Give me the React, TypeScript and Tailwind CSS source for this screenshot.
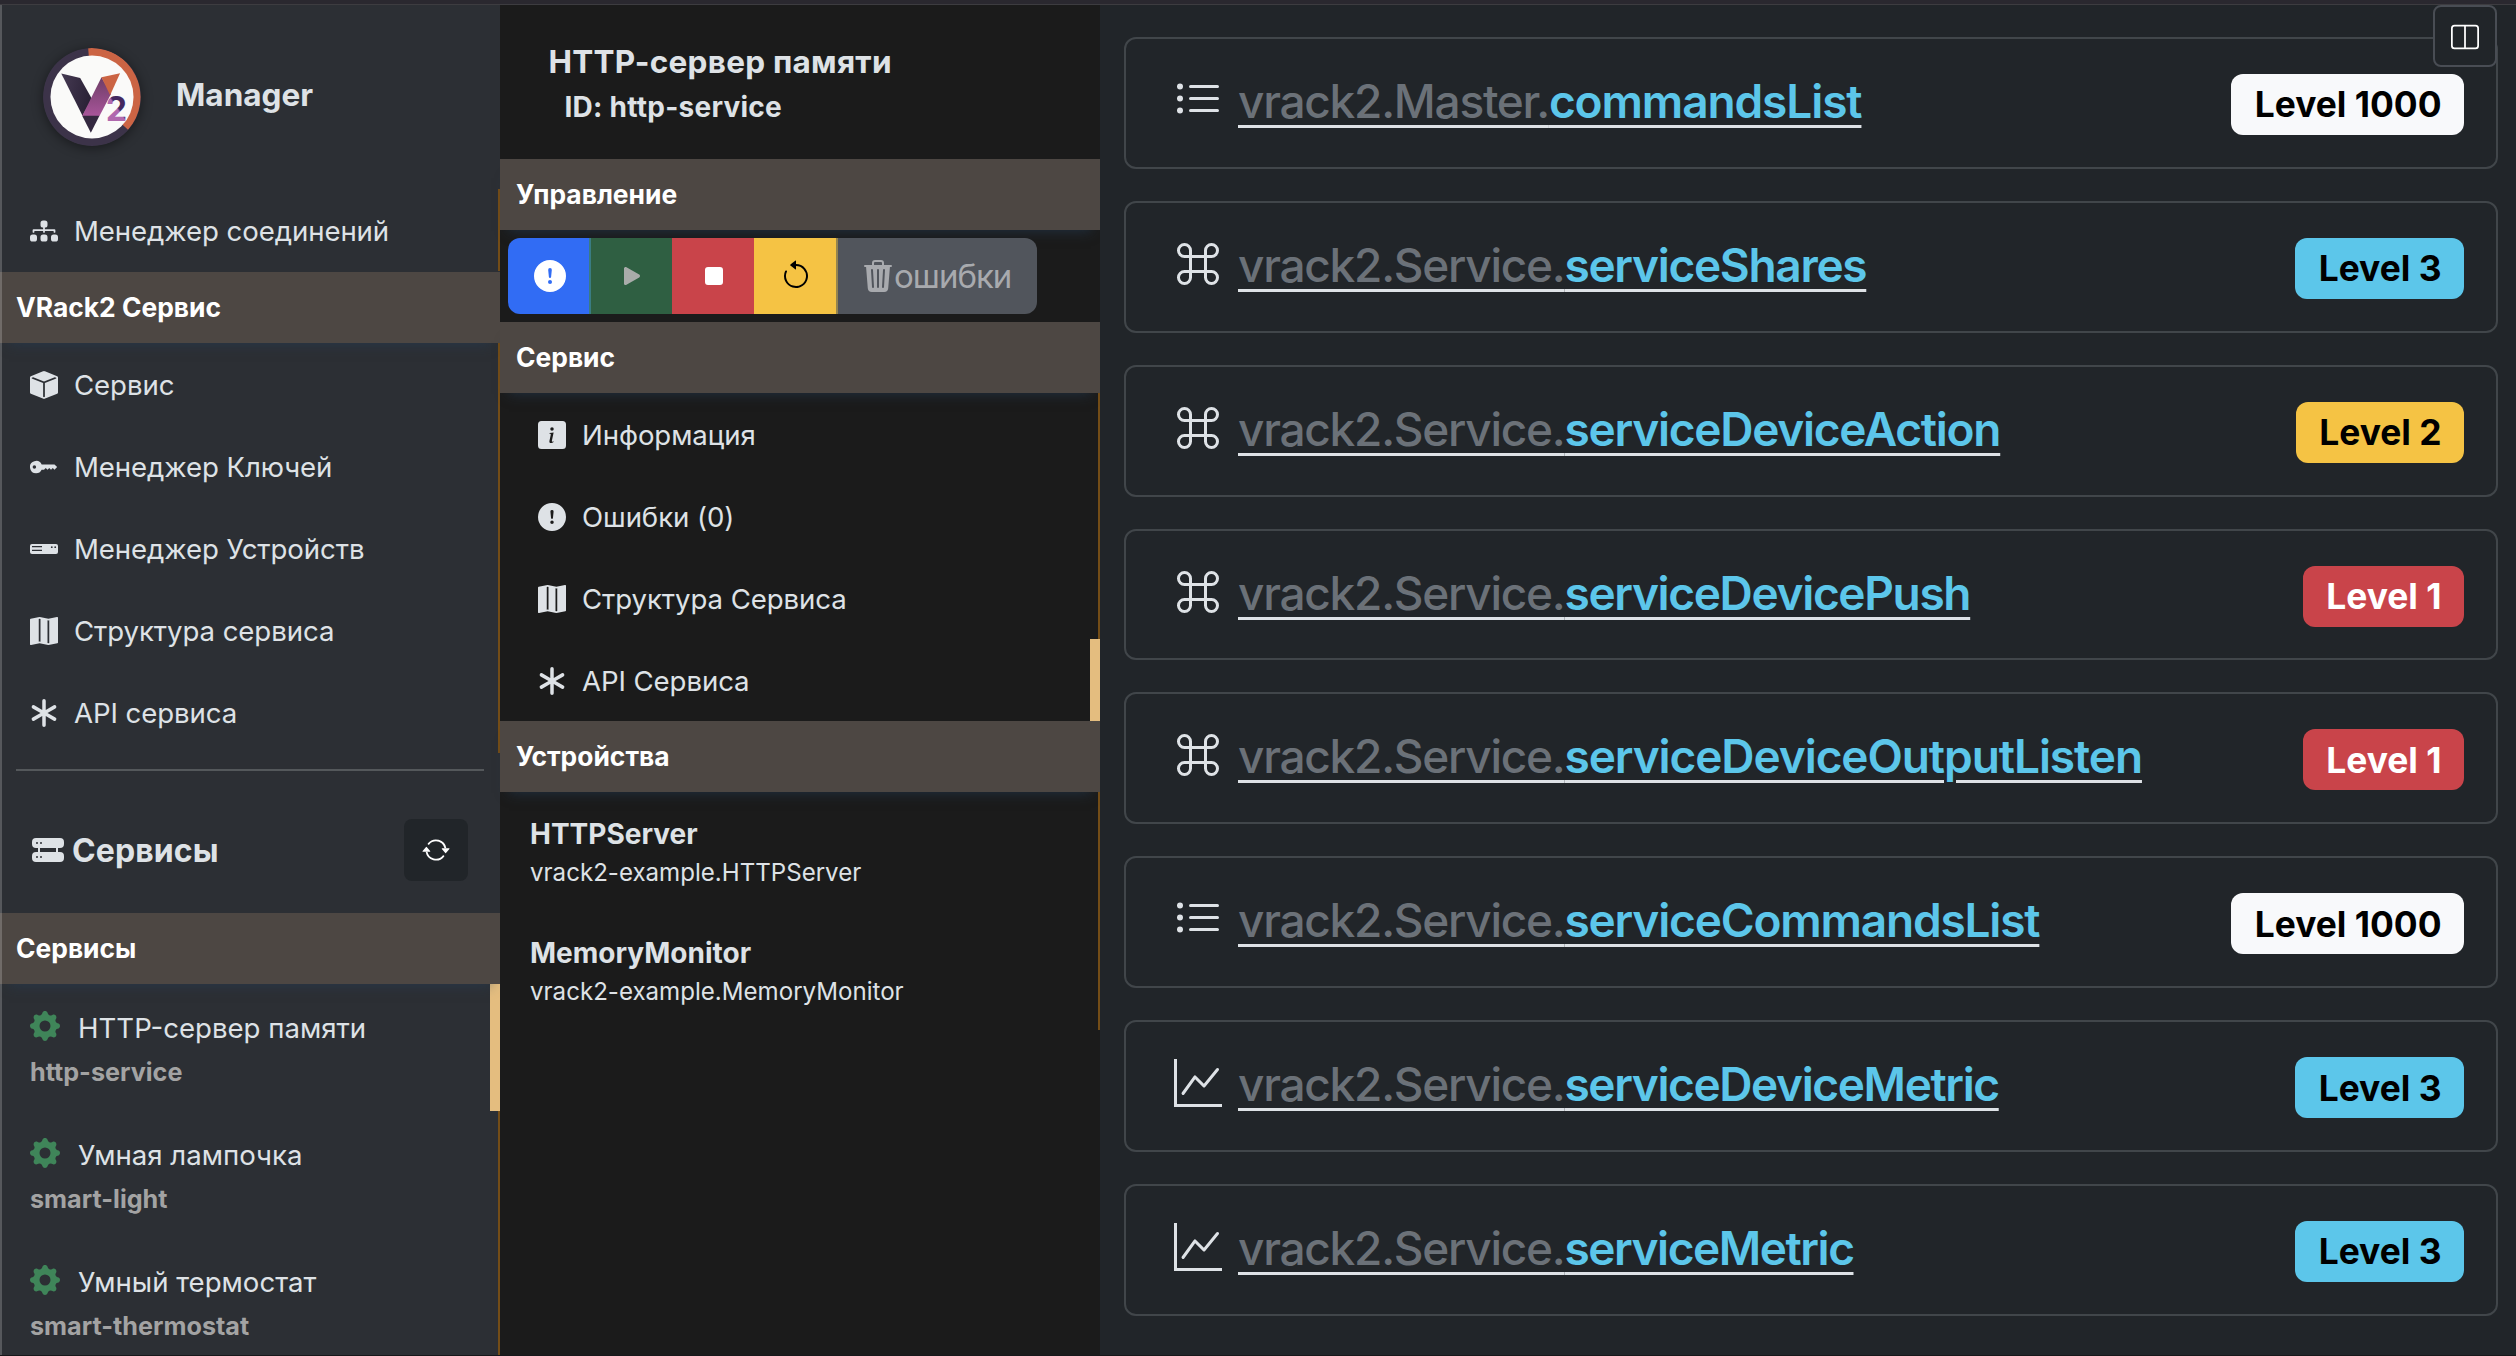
import React from "react";
import {
  BsArrowCounterclockwise,
  BsArrowRepeat,
  BsAsterisk,
  BsCommand,
  BsDiagram3Fill,
  BsExclamationCircleFill,
  BsGearFill,
  BsGraphUp,
  BsHddRackFill,
  BsInfoSquareFill,
  BsKeyFill,
  BsLayoutSplit,
  BsListUl,
  BsMapFill,
  BsPlayFill,
  BsStopFill,
  BsTrash3Fill,
} from "react-icons/bs";

type IconType = React.ComponentType<{ className?: string }>;

function BoxIcon({ className }: { className?: string }) {
  return (
    <svg viewBox="0 0 16 16" fill="currentColor" className={className}>
      <path d="M15.528 2.973a.75.75 0 0 1 .472.696v8.662a.75.75 0 0 1-.472.696l-7.25 2.9a.75.75 0 0 1-.557 0l-7.25-2.9A.75.75 0 0 1 0 12.331V3.669a.75.75 0 0 1 .471-.696L7.443.184l.004-.001.274-.11a.75.75 0 0 1 .558 0l.274.11.004.001zm-1.374.527L8 5.962 1.846 3.5 1 3.839v.4l6.5 2.6v7.922l.5.2.5-.2V6.84l6.5-2.6v-.4l-.846-.339Z" />
    </svg>
  );
}

function DeviceIcon({ className }: { className?: string }) {
  return (
    <svg viewBox="0 0 28 28" className={className}>
      <rect x="0" y="9" width="28" height="10" rx="2" fill="currentColor" />
      <path d="M2 11.7h10M2 15.3h10" stroke="#2c2f34" strokeWidth="1.2" />
      <circle cx="21.8" cy="12.2" r="0.9" fill="#2c2f34" />
      <circle cx="25.2" cy="12.2" r="0.9" fill="#2c2f34" />
    </svg>
  );
}

function Logo() {
  return (
    <svg viewBox="21 22 295 295" className="size-[98px] rounded-full shadow-[0_2px_12px_rgba(0,0,0,0.45)]">
      <defs>
        <linearGradient id="left" x1="0" y1="0" x2="1" y2="0.3">
          <stop offset="0" stopColor="#453a52" />
          <stop offset="1" stopColor="#2b2237" />
        </linearGradient>
        <linearGradient id="mid" x1="0" y1="0" x2="0" y2="1">
          <stop offset="0" stopColor="#6d3d66" />
          <stop offset="1" stopColor="#a8559a" />
        </linearGradient>
        <linearGradient id="two" x1="1" y1="0" x2="0.25" y2="1">
          <stop offset="0.5" stopColor="#43285f" />
          <stop offset="0.55" stopColor="#b069ae" />
        </linearGradient>
      </defs>
      <circle cx="168.500" cy="169.500" r="147.500" fill="#3c3349" />
      <path d="M157 22.500A147.500 147.500 0 0 1 277 268L168.500 169.500Z" fill="#cb6444" />
      <circle cx="168.500" cy="169.500" r="125" fill="#fafaf9" />
      <path d="M76 99L133 112L168 175L140 226Z" fill="url(#left)" />
      <path d="M197 110L226 160L191 227H139Z" fill="url(#mid)" />
      <path d="M197 110L253 98L223 164Z" fill="#cb6444" />
      <path d="M139 226H191L165 277Z" fill="#33283f" />
      <text x="210" y="242" fontSize="102" fontWeight="700" fontFamily="Inter" fill="url(#two)">
        2
      </text>
    </svg>
  );
}

function Section({ title }: { title: string }) {
  return (
    <div className="relative flex h-[71px] shrink-0 items-center bg-[#4d4743] pt-px pl-4 text-[26.4px] font-bold text-white shadow-[0_10px_12px_-9px_rgba(37,62,88,0.6)]">
      {title}
    </div>
  );
}

function MenuItem({
  icon: Icon,
  label,
  pad,
  tone,
}: {
  icon: IconType;
  label: string;
  pad: string;
  tone: string;
}) {
  return (
    <div className={`flex h-[82px] shrink-0 items-center gap-4 pt-0.5 ${pad} ${tone}`}>
      <Icon className="size-7 shrink-0" />
      <span className="pt-0.5 text-[27.6px] tracking-[-0.08px] whitespace-nowrap">{label}</span>
    </div>
  );
}

const thin = "border-r-2 border-[#744d17]";
const thick = "border-r-10 border-[#e4bd7f]";

const services = [
  { name: "HTTP-сервер памяти", id: "http-service", tone: thick },
  { name: "Умная лампочка", id: "smart-light", tone: thin },
  { name: "Умный термостат", id: "smart-thermostat", tone: thin },
];

const serviceMenu: [IconType, string][] = [
  [BoxIcon, "Сервис"],
  [BsKeyFill, "Менеджер Ключей"],
  [DeviceIcon, "Менеджер Устройств"],
  [BsMapFill, "Структура сервиса"],
  [BsAsterisk, "API сервиса"],
];

function Sidebar() {
  return (
    <aside className="relative flex w-[500px] shrink-0 flex-col overflow-hidden bg-[#2c2f34]">
      <div className="flex h-[184px] shrink-0 items-center pl-[43px]">
        <Logo />
        <h1 className="ml-[35px] pb-1 text-[31.5px] font-bold">Manager</h1>
      </div>
      <MenuItem icon={BsDiagram3Fill} label="Менеджер соединений" pad="pl-[30px] mb-px" tone={thin} />
      <Section title="VRack2 Сервис" />
      {serviceMenu.map(([icon, label]) => (
        <MenuItem key={label} icon={icon} label={label} pad="pl-[30px]" tone={thin} />
      ))}
      <div className="mx-4 mt-4 h-0.5 shrink-0 bg-[#54585b]" />
      <div className="flex h-[142px] shrink-0 items-center justify-between pt-4 pr-8 pl-8">
        <h2 className="flex items-center gap-2 text-[32px] font-bold">
          <BsHddRackFill className="size-8" />
          <span className="pt-0.5 tracking-[0.1px]">Сервисы</span>
        </h2>
        <button className="flex h-[62px] w-16 items-center justify-center rounded-lg bg-[#212529] text-white">
          <BsArrowRepeat className="size-7" />
        </button>
      </div>
      <Section title="Сервисы" />
      {services.map((s) => (
        <div key={s.id} className={`h-[127px] shrink-0 pt-6 pl-[30px] ${s.tone}`}>
          <div className="flex h-[42px] items-center">
            <BsGearFill className="mb-1.5 size-[30px] text-[#3f8559]" />
            <span className="ml-[18px] text-[27.6px]">{s.name}</span>
          </div>
          <div className="text-[25.2px] leading-[44px] font-bold text-[#a3a3a3]">{s.id}</div>
        </div>
      ))}
      <div className="absolute inset-y-0 left-0 w-0.5 bg-white/20" />
    </aside>
  );
}

const detailMenu: [IconType, string, string][] = [
  [BsInfoSquareFill, "Информация", thin],
  [BsExclamationCircleFill, "Ошибки (0)", thin],
  [BsMapFill, "Структура Сервиса", thin],
  [BsAsterisk, "API Сервиса", thick],
];

const devices = [
  ["HTTPServer", "vrack2-example.HTTPServer"],
  ["MemoryMonitor", "vrack2-example.MemoryMonitor"],
];

function ServicePanel() {
  return (
    <section className="flex w-[600px] shrink-0 flex-col bg-[#1b1b1b]">
      <div className="h-[154px] shrink-0 pt-9 pl-[48.5px] font-bold">
        <h2 className="text-[31.5px] leading-[42px] tracking-[0.25px]">HTTP-сервер памяти</h2>
        <p className="pl-4 text-[28px] leading-[49px] tracking-[0.25px]">ID: http-service</p>
      </div>
      <Section title="Управление" />
      <div className="relative flex h-[92px] shrink-0 p-2">
        <div className="flex h-[76px] overflow-hidden rounded-xl text-white">
          <button className="flex w-[83px] items-center justify-center border-r-2 border-[#3a7c83] bg-[#316cf4] pl-0.5">
            <BsExclamationCircleFill className="size-8" />
          </button>
          <button className="flex w-[81px] items-center justify-center bg-[#2f5f42] text-[#a9acaa]">
            <BsPlayFill className="size-8" />
          </button>
          <button className="flex w-[82px] items-center justify-center bg-[#c9444a] pl-0.5">
            <BsStopFill className="size-8" />
          </button>
          <button className="flex w-[84px] items-center justify-center border-r-2 border-[#94844f] bg-[#f5c344] pl-0.5 text-black">
            <BsArrowCounterclockwise className="size-8" />
          </button>
          <button className="flex w-[198.500px] items-center bg-[#51555c] pl-6 text-[#a8aaae]">
            <BsTrash3Fill className="size-8 shrink-0" />
            <span className="pt-0.5 text-[33px] tracking-[-1px]">ошибки</span>
          </button>
        </div>
      </div>
      <Section title="Сервис" />
      {detailMenu.map(([icon, label, tone]) => (
        <MenuItem key={label} icon={icon} label={label} pad="pl-[38px]" tone={tone} />
      ))}
      <Section title="Устройства" />
      {devices.map(([name, type]) => (
        <div key={name} className={`h-[119px] shrink-0 pt-[22px] pl-[30px] ${thin}`}>
          <div className="text-[28px] leading-10 font-bold">{name}</div>
          <div className="text-[24.1px] leading-[38px]">{type}</div>
        </div>
      ))}
    </section>
  );
}

const badge: Record<string, string> = {
  "1000": "bg-[#f8f9fb] text-black",
  "3": "bg-[#5cc6ea] text-black",
  "2": "bg-[#f5c344] text-black",
  "1": "bg-[#c9444a] text-white",
};

const commands: [IconType, string, string, string, string][] = [
  [BsListUl, "vrack2.Master.", "commandsList", "1000", "tracking-[-1.1px]"],
  [BsCommand, "vrack2.Service.", "serviceShares", "3", "tracking-[-1.3px]"],
  [BsCommand, "vrack2.Service.", "serviceDeviceAction", "2", "tracking-[-1.25px]"],
  [BsCommand, "vrack2.Service.", "serviceDevicePush", "1", "tracking-[-1.33px]"],
  [BsCommand, "vrack2.Service.", "serviceDeviceOutputListen", "1", "tracking-[-1.08px]"],
  [BsListUl, "vrack2.Service.", "serviceCommandsList", "1000", "tracking-[-1.18px]"],
  [BsGraphUp, "vrack2.Service.", "serviceDeviceMetric", "3", "tracking-[-1.38px]"],
  [BsGraphUp, "vrack2.Service.", "serviceMetric", "3", "tracking-[-1.45px]"],
];

function CommandList() {
  return (
    <main className="relative flex flex-1 flex-col gap-8 bg-[#212529] pt-8 pr-[18px] pl-6">
      {commands.map(([Icon, prefix, name, level, tracking]) => (
        <article
          key={name}
          className="flex h-[131.86px] shrink-0 items-center rounded-xl border-2 border-[#41464a] pr-8 pl-12"
        >
          <Icon className="mb-1.5 size-12 shrink-0" />
          <a className="mb-1 ml-4 text-[46px] leading-none whitespace-nowrap underline decoration-[#dee2e6] decoration-[3px] underline-offset-[7px]">
            <span className="font-medium tracking-[-1.27px] text-[#6b7178]">{prefix}</span>
            <span className={`font-[560] text-[#5cc6ea] ${tracking}`}>{name}</span>
          </a>
          <span
            className={`mt-[3px] ml-auto flex h-[61px] items-center rounded-xl pt-px pr-[22.5px] pl-[23.5px] text-[35.4px] font-bold tracking-[-0.02px] ${badge[level]}`}
          >
            Level {level}
          </span>
        </article>
      ))}
      <button className="absolute top-0 right-[19px] flex h-[62px] w-16 items-center justify-center rounded-lg border-2 border-[#494d54] bg-[#212529] pt-0.5 text-white">
        <BsLayoutSplit className="size-7" />
      </button>
    </main>
  );
}

export default function App() {
  return (
    <div className="flex h-[1356px] w-[2516px] flex-col overflow-hidden bg-[#2a282f] font-['Inter',sans-serif] text-[#dee2e6]">
      <div className="h-[5px] shrink-0 border-b border-[#3d3c40]" />
      <div className="flex min-h-0 flex-1">
        <Sidebar />
        <ServicePanel />
        <CommandList />
      </div>
      <div className="h-px shrink-0 bg-[#17171a]" />
    </div>
  );
}
